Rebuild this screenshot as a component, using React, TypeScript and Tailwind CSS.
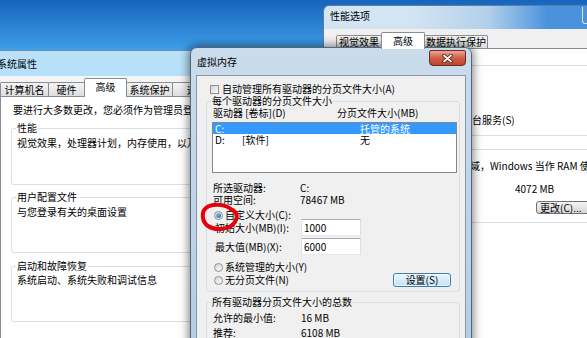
import React from "react";

function Radio({ checked = false }: { checked?: boolean }) {
  return (
    <span className="flex h-[9px] w-[9px] shrink-0 items-center justify-center rounded-full border border-[#8e8f8f] bg-linear-to-br from-[#d6d6d6] to-[#fbfbfb]">
      {checked ? <span className="h-[5px] w-[5px] rounded-full bg-linear-to-br from-[#8fd0ff] to-[#1b5fae]" /> : null}
    </span>
  );
}

function Tab({ label, selected = false, className = "" }: { label: string; selected?: boolean; className?: string }) {
  if (selected) {
    return (
      <div className={"relative z-10 mb-[-1px] flex items-start justify-center whitespace-nowrap rounded-t-[2px] border border-b-0 border-[#898c95] bg-white pt-[2px] " + className}>
        {label}
      </div>
    );
  }
  return (
    <div className={"flex items-center justify-center whitespace-nowrap rounded-t-[2px] border border-b-0 border-[#898c95] bg-linear-to-b from-[#f4f4f4] to-[#dedede] " + className}>
      {label}
    </div>
  );
}

function Group({
  label,
  labelBg,
  className = "",
  children,
}: {
  label?: string;
  labelBg?: string;
  className?: string;
  children?: React.ReactNode;
}) {
  return (
    <div className={"relative rounded-[3px] border border-[#d5dfe5] " + className}>
      {label ? (
        <span className={"absolute left-[4px] top-[-7px] whitespace-nowrap px-[1px] leading-[12px] " + (labelBg ?? "")}>{label}</span>
      ) : null}
      {children}
    </div>
  );
}

function TextBox({ value }: { value: string }) {
  return (
    <div className="flex h-[17px] w-[60px] items-center border border-[#abadb3] border-b-[#e3e9ef] border-l-[#e2e3ea] border-r-[#dbdfe6] bg-white pl-[2px]">
      {value}
    </div>
  );
}

export default function App() {
  return (
    <div className="relative h-[338px] w-[587px] overflow-hidden bg-linear-to-b from-[#1764bd] to-[#3f9fe8] to-15% font-['Noto_Sans_CJK_SC',sans-serif] text-[10px] leading-[12px] text-black">
      {/* System properties window */}
      <div className="absolute left-[-8px] top-[50px] flex h-[300px] w-[270px] flex-col overflow-hidden rounded-t-[6px] border border-[#6c8eae] bg-linear-to-b from-[#b9e1fa] to-[#9fd1f3]">
        <div className="flex h-[25px] shrink-0 items-center whitespace-nowrap pl-[4px]">系统属性</div>
        <div className="flex min-h-0 flex-1 flex-col bg-[#f4f4f4] pl-[7px] pt-[2px]">
          <div className="flex h-[18px] shrink-0 items-end">
            <Tab className="h-[14px] w-[49px]" label="计算机名" />
            <Tab className="ml-[-1px] h-[14px] w-[37px]" label="硬件" />
            <Tab selected className="ml-[-1px] h-[19px] w-[43px]" label="高级" />
            <Tab className="ml-[-1px] h-[14px] w-[47px]" label="系统保护" />
            <Tab className="ml-[-1px] h-[14px] w-[50px]" label="远程" />
          </div>
          <div className="min-h-0 flex-1 overflow-hidden border border-[#898c95] bg-white pl-[10px] pt-[7px]">
            <div className="ml-[2px] whitespace-nowrap">要进行大多数更改，您必须作为管理员登录。</div>
            <Group label="性能" labelBg="bg-white" className="mt-[12px] h-[57px] w-[240px] pl-[5px] pt-[8px]">
              <div className="whitespace-nowrap">视觉效果，处理器计划，内存使用，以及虚拟内存</div>
            </Group>
            <Group label="用户配置文件" labelBg="bg-white" className="mt-[12px] h-[56px] w-[240px] pl-[5px] pt-[8px]">
              <div className="whitespace-nowrap">与您登录有关的桌面设置</div>
            </Group>
            <Group label="启动和故障恢复" labelBg="bg-white" className="mt-[13px] h-[56px] w-[240px] pl-[5px] pt-[7px]">
              <div className="whitespace-nowrap">系统启动、系统失败和调试信息</div>
            </Group>
          </div>
        </div>
      </div>

      {/* Performance options window */}
      <div className="absolute left-[323px] top-[5px] flex h-[340px] w-[300px] flex-col overflow-hidden rounded-t-[6px] border border-[#5b7ea3]">
        <div className="flex h-[23px] shrink-0 items-start bg-linear-to-r from-[#d3e4f2] from-30% via-[#b3d0eb] via-55% to-[#4a92dc] to-75% pl-[6px] pt-[4px]">
          <span className="whitespace-nowrap">性能选项</span>
          <span className="ml-auto mr-[14px] mt-[-3px] h-[17px] w-[26px] rounded-b-[3px] border border-t-0 border-[#d7e6f4]" />
        </div>
        <div className="flex min-h-0 flex-1 flex-col bg-[#f0f0f0] pl-[10px] pt-[3px]">
          <div className="flex h-[16px] shrink-0 items-end pl-[2px]">
            <Tab className="h-[13px] w-[46px]" label="视觉效果" />
            <Tab selected className="ml-[-1px] h-[17px] w-[44px]" label="高级" />
            <Tab className="ml-[-1px] h-[13px] w-[64px]" label="数据执行保护" />
          </div>
          <div className="min-h-0 flex-1 overflow-hidden border border-[#898c95] bg-white pl-[4px] pt-[16px]">
            <Group className="h-[71px] w-[280px] pt-[48px]">
              <div className="flex h-[12px] items-center pl-[111px]">
                <div className="flex items-center gap-[2px]">
                  <Radio />
                  <span className="whitespace-nowrap">后台服务(S)</span>
                </div>
              </div>
            </Group>
            <Group className="mt-[13px] h-[74px] w-[280px] pt-[10px]">
              <div className="whitespace-nowrap pl-[130px]">域，Windows 当作 RAM 使用。</div>
              <div className="mt-[11px] h-[12px] whitespace-nowrap pl-[175px]">4072 MB</div>
              <div className="ml-[196px] mt-[6px] flex h-[13px] w-[70px] items-center whitespace-nowrap rounded-[3px] border border-[#707070] bg-linear-to-b from-[#f4f4f4] to-[#d6d6d6] pl-[3px]">
                更改(C)...
              </div>
            </Group>
          </div>
        </div>
      </div>

      {/* Virtual memory dialog */}
      <div className="absolute left-[190px] top-[47px] flex h-[300px] w-[282px] flex-col rounded-t-[7px] border border-[#50667d] bg-linear-to-b from-[#cadcec] to-[#b5cde2] px-[5px] shadow-[0_0_8px_2px_rgba(0,0,0,0.45)]">
        <div className="flex h-[27px] shrink-0 items-start justify-between">
          <span className="mt-[8px] whitespace-nowrap pl-[1px]">虚拟内存</span>
          <div className="mt-[2px] flex h-[16px] w-[37px] items-center justify-center rounded-b-[4px] rounded-t-[2px] border border-[#6e2b20] bg-linear-to-b from-[#e9a894] via-[#cf5d47] to-[#c0432e]">
            <svg width="11" height="9" viewBox="0 0 11 9">
              <path d="M2 1.5 L9 7.5 M9 1.5 L2 7.5" stroke="#4a1a12" strokeWidth="3.4" strokeLinecap="round" fill="none" />
              <path d="M2 1.5 L9 7.5 M9 1.5 L2 7.5" stroke="#ffffff" strokeWidth="1.8" strokeLinecap="round" fill="none" />
            </svg>
          </div>
        </div>
        <div className="min-h-0 flex-1 overflow-hidden border border-[#8497ab] bg-[#f0f0f0] pl-[9px] pr-[5px] pt-[7px]">
          <div className="ml-[4px] flex h-[12px] items-center gap-[3px]">
            <span className="h-[9px] w-[9px] shrink-0 border border-[#8e8f8f] bg-linear-to-br from-[#d6d6d6] to-[#fafafa]" />
            <span className="whitespace-nowrap">自动管理所有驱动器的分页文件大小(A)</span>
          </div>

          <Group label="每个驱动器的分页文件大小" labelBg="bg-[#f0f0f0]" className="mt-[6px] pb-[4px] pl-[5px] pr-[2px] pt-[5px]">
            <div className="ml-[1px] flex whitespace-nowrap">
              <span className="w-[124px]">驱动器 [卷标](D)</span>
              <span>分页文件大小(MB)</span>
            </div>
            <div className="mt-[3px] h-[51px] border border-[#828790] bg-white">
              <div className="grid h-[11px] grid-cols-[27px_118px_1fr] whitespace-nowrap bg-[#3399ff] pl-[2px] leading-[11px] text-white">
                <span>C:</span>
                <span />
                <span>托管的系统</span>
              </div>
              <div className="grid h-[11px] grid-cols-[27px_118px_1fr] whitespace-nowrap pl-[2px] leading-[11px]">
                <span>D:</span>
                <span>[软件]</span>
                <span>无</span>
              </div>
            </div>
            <div className="ml-[1px] mt-[9px] grid grid-cols-[87px_1fr] whitespace-nowrap">
              <span>所选驱动器:</span>
              <span>C:</span>
              <span>可用空间:</span>
              <span>78467 MB</span>
            </div>
            <div className="ml-[2px] mt-[4px] flex h-[10px] items-center gap-[2px]">
              <Radio checked />
              <span className="whitespace-nowrap">自定义大小(C):</span>
            </div>
            <div className="mt-[-1px] flex h-[17px] items-center">
              <span className="ml-[3px] w-[86px] whitespace-nowrap">初始大小(MB)(I):</span>
              <TextBox value="1000" />
            </div>
            <div className="mt-[2px] flex h-[17px] items-center">
              <span className="ml-[3px] w-[86px] whitespace-nowrap">最大值(MB)(X):</span>
              <TextBox value="6000" />
            </div>
            <div className="ml-[2px] mt-[6px] flex h-[12px] items-center gap-[2px]">
              <Radio />
              <span className="whitespace-nowrap">系统管理的大小(Y)</span>
            </div>
            <div className="flex h-[14px] items-center justify-between">
              <div className="ml-[2px] flex items-center gap-[2px]">
                <Radio />
                <span className="whitespace-nowrap">无分页文件(N)</span>
              </div>
              <div className="mr-[6px] flex h-[14px] w-[58px] items-center justify-center whitespace-nowrap rounded-[3px] border border-[#3c7fb1] bg-linear-to-b from-[#eaf6fd] to-[#bfe3f8] shadow-[inset_0_0_0_1px_rgba(255,255,255,0.7)]">
                设置(S)
              </div>
            </div>
          </Group>

          <Group label="所有驱动器分页文件大小的总数" labelBg="bg-[#f0f0f0]" className="mt-[10px] h-[60px] pl-[6px] pt-[9px]">
            <div className="grid grid-cols-[88px_1fr] gap-y-[3px] whitespace-nowrap">
              <span>允许的最小值:</span>
              <span>16 MB</span>
              <span>推荐:</span>
              <span>6108 MB</span>
            </div>
          </Group>
        </div>
      </div>

      {/* Red hand-drawn circle */}
      <svg className="pointer-events-none absolute left-[196px] top-[198px]" width="46" height="38" viewBox="196 198 46 38">
        <path
          d="M232 210 C226 204, 212 203, 206 208 C201 212, 202 222, 208 226 C215 231, 230 230, 235 222 C238 217, 237 213, 233 210"
          stroke="#e3000b"
          strokeWidth="4"
          strokeLinecap="round"
          fill="none"
        />
      </svg>
    </div>
  );
}
